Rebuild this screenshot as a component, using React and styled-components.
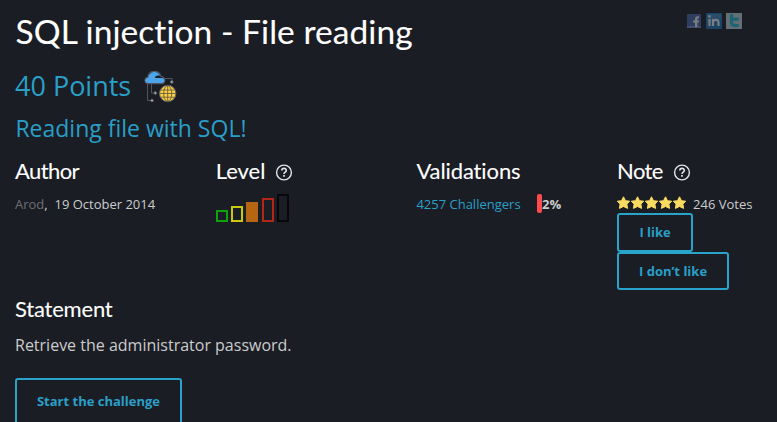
import React from "react";
import styled, { createGlobalStyle } from "styled-components";

const Global = createGlobalStyle`
  * { box-sizing: border-box; }
  body {
    margin: 0;
    background: #1a1d24;
    color: #ccc;
    font: 13px/20px "Open Sans", "Noto Sans", sans-serif;
    overflow: hidden;
  }
  h1, h2, h3, h4, p { margin: 0; font-weight: 400; }
`;

const Page = styled.main`
  width: 777px;
  height: 422px;
  padding: 12px 0 0 15px;
  overflow: hidden;
`;
const TopBar = styled.header`
  display: flex;
  justify-content: space-between;
  height: 54px;
`;
const Title = styled.h1`
  padding-left: 0.6px;
  color: #fff;
  font: 400 33.5px/38px Lato, sans-serif;
  letter-spacing: 0.06px;
  -webkit-text-stroke: 0.1px #fff;
  white-space: nowrap;
`;
const Share = styled.nav`
  display: flex;
  gap: 4px;
  padding: 1px 35px 0 0;
  opacity: 0.5;
`;
const Points = styled.h2`
  display: flex;
  align-items: flex-start;
  gap: 13px;
  height: 42px;
  color: #2a9fc8;
  font-size: 27px;
  line-height: 39px;
`;
const Tagline = styled.h3`
  height: 50px;
  padding: 4px 0 0 0.4px;
  color: #2a9fc8;
  font-size: 23px;
  line-height: 33px;
`;
const Facts = styled.section`
  display: grid;
  grid-template-columns: repeat(4, 200.7px);
  height: 138px;
`;
const Heading = styled.h4`
  display: flex;
  align-items: center;
  gap: 10px;
  height: 28px;
  color: #fff;
  font: 400 22px/26px Lato, sans-serif;
  letter-spacing: ${(p) => p.$tracking || "0"};
  -webkit-text-stroke: 0.1px #fff;
`;
const HeadingText = styled.span`
  height: 28px;
`;
const Line = styled.div`
  display: flex;
  align-items: center;
  height: 20px;
  margin-top: 8px;
  white-space: pre;
`;
const Author = styled.span`
  color: #6d6f72;
`;
const Link = styled.a`
  color: #2a9fc8;
`;
const Gauge = styled.span`
  width: 5px;
  height: 19px;
  margin: -2px 0 0 16.4px;
  border-radius: 2px;
  background: #ff4b4b;
`;
const Levels = styled.div`
  display: flex;
  align-items: flex-end;
  gap: 3.4px;
  height: 29px;
  margin-top: 7px;
`;
const LevelBar = styled.span`
  width: 12px;
  height: ${(p) => p.$height}px;
  border: 2px solid ${(p) => p.$color};
  background: ${(p) => (p.$filled ? p.$color : "transparent")};
`;
const Stars = styled.span`
  display: flex;
  margin: -3px 6px 0 0;
`;
const Votes = styled.div`
  display: flex;
  flex-direction: column;
  align-items: flex-start;
  margin-top: -1px;
`;
const Button = styled.button`
  width: ${(p) => p.$width}px;
  height: ${(p) => p.$height}px;
  padding: 0 0 ${(p) => p.$lift || 1}px;
  border: 2px solid #28a3ca;
  border-radius: 3px;
  background: transparent;
  color: #2a9fc8;
  font: 700 13px/18px "Open Sans", sans-serif;
`;
const Statement = styled.p`
  height: 54px;
  padding-top: 9px;
  font-size: 16px;
  line-height: 24px;
`;

const Help = () => (
  <svg width="18" height="18" viewBox="0 0 18 18" fill="none" stroke="#e4e5e6">
    <circle cx="9" cy="9.5" r="7.4" strokeWidth="1.4" />
    <path d="M6.8 7.6C6.8 4.7 11.3 4.7 11.3 7.5C11.3 9.1 9 9.1 9 10.9" strokeWidth="1.6" />
    <path d="M9 12v1.7" strokeWidth="1.7" />
  </svg>
);

const Star = () => (
  <svg width="14" height="14" viewBox="0 0 14 14">
    <path
      d="M6.5 .8L8.5 4.7L12.7 5.2L9.9 8.1L10.6 12.4L6.5 10.5L2.4 12.4L3.1 8.1L.3 5.2L4.5 4.7Z"
      fill="#fadb5f"
      stroke="#fadb5f"
      strokeWidth="1"
      strokeLinejoin="round"
    />
  </svg>
);

const CloudGlobe = () => (
  <svg width="34" height="36" viewBox="0 0 34 36" fill="none" transform="translate(0 4)">
    <g stroke="#50545d" strokeWidth="1">
      <path d="M20.5 8.5h7.5v3M3.5 13v17.5h4M7.5 13v10h3" />
      <path d="M4 13.7C0 13.7 0 7.5 4 7.3C4.5-.5 15-.5 17 6.3C22 7 21.5 13.7 18 13.7Z" strokeWidth="1.2" />
    </g>
    <path d="M3.8 13C.3 13 .3 8 4.2 7.8C5 1 14 0 16 5.8C12.7 5.2 11.5 6 11 8H18C21.3 8 21.3 13 17.8 13Z" fill="#4da6ec" />
    <g fill="#b9bdc4" stroke="#5c6069">
      <circle cx="27.8" cy="12" r="1.3" />
      <circle cx="11.3" cy="23" r="1.3" />
      <circle cx="8" cy="30.5" r="1.3" />
    </g>
    <circle cx="23.7" cy="23.5" r="8.2" fill="#f9ce43" stroke="#5c6069" />
    <g stroke="#5d543c" strokeWidth=".8">
      <ellipse cx="23.7" cy="23.5" rx="4" ry="7.9" />
      <path d="M23.7 15.5v16M16.7 20h14M15.8 23.5h15.8M16.7 27.2h14" />
    </g>
  </svg>
);

const Facebook = () => (
  <svg width="16" height="16" viewBox="0 0 16 16">
    <path d="M1 1h14v14H1Z" fill="#41609c" />
    <path d="M1 13h14v2H1Z" fill="#6880b2" />
    <path d="M9 14V9.5H7v-2h2V6C9 3.8 10.3 3 13 3.2V5.2C11.5 5 11.3 5.4 11.3 7.5H13L12.7 9.5h-1.4V14" fill="#ddd" />
  </svg>
);
const LinkedIn = () => (
  <svg width="16" height="16" viewBox="0 0 16 16">
    <rect width="16" height="16" rx="1" fill="#1b6da5" />
    <path d="M1 1h14v5L1 9Z" fill="#397eae" />
    <path d="M3.5 6V13M7 13V6M7 9C8 6.3 12.5 5.5 12.5 9.5V13" fill="none" stroke="#ddd" strokeWidth="2.2" />
    <circle cx="3.5" cy="3.4" r="1.3" fill="#ddd" />
  </svg>
);
const Twitter = () => (
  <svg width="16" height="16" viewBox="0 0 16 16">
    <rect width="16" height="16" fill="#aebfc5" />
    <path d="M5.5 2.5V9.5C5.5 12 7 12.7 11.5 12.5M5.5 6.2H11.5" fill="none" stroke="#20aac4" strokeWidth="3.2" strokeLinecap="round" />
  </svg>
);

const levels = [
  { height: 12, color: "#11a011" },
  { height: 16, color: "#cac90c" },
  { height: 20, color: "#b66512", filled: true },
  { height: 24, color: "#b42718" },
  { height: 28, color: "#07080b" },
];

export default function App() {
  return (
    <Page>
      <Global />
      <TopBar>
        <Title>SQL injection - File reading</Title>
        <Share>
          <Facebook />
          <LinkedIn />
          <Twitter />
        </Share>
      </TopBar>
      <Points>
        <span>40 Points</span>
        <CloudGlobe />
      </Points>
      <Tagline>Reading file with SQL!</Tagline>
      <Facts>
        <div>
          <Heading $tracking="-0.6px"><HeadingText>Author</HeadingText></Heading>
          <Line>
            <Author>Arod</Author>,{"  "}19 October 2014
          </Line>
        </div>
        <div>
          <Heading><HeadingText>Level</HeadingText><Help /></Heading>
          <Levels>
            {levels.map((l) => (
              <LevelBar key={l.color} $height={l.height} $color={l.color} $filled={l.filled} />
            ))}
          </Levels>
        </div>
        <div>
          <Heading $tracking="-0.1px"><HeadingText>Validations</HeadingText></Heading>
          <Line>
            <Link>4257 Challengers</Link>
            <Gauge />
            <b>2%</b>
          </Line>
        </div>
        <div>
          <Heading $tracking="-0.6px"><HeadingText>Note</HeadingText><Help /></Heading>
          <Line>
            <Stars>
              {[1, 2, 3, 4, 5].map((n) => <Star key={n} />)}
            </Stars>
            246 Votes
          </Line>
          <Votes>
            <Button $width={76} $height={39}>I like</Button>
            <Button $width={112} $height={38}>I don’t like</Button>
          </Votes>
        </div>
      </Facts>
      <Heading $tracking="-0.2px"><HeadingText>Statement</HeadingText></Heading>
      <Statement>Retrieve the administrator password.</Statement>
      <Button $width={167} $height={48} $lift={3}>Start the challenge</Button>
    </Page>
  );
}
